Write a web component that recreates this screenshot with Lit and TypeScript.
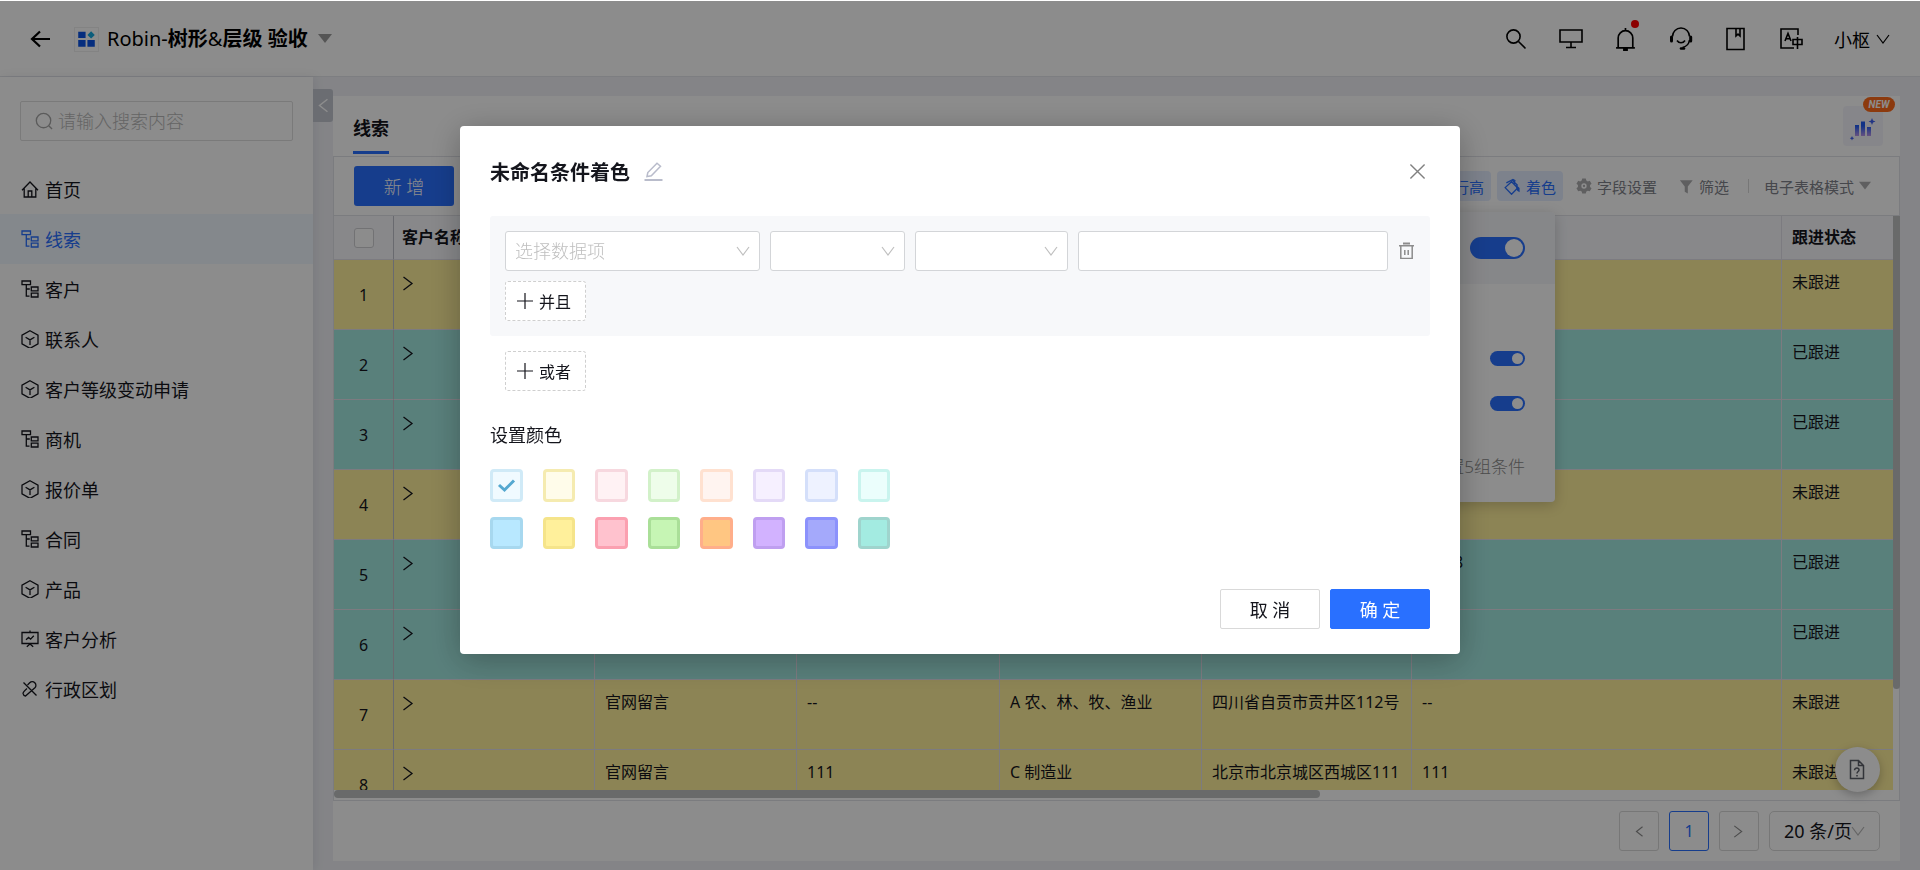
import { LitElement, html, svg, css, nothing } from "lit";
import { customElement, state } from "lit/decorators.js";
import { classMap } from "lit/directives/class-map.js";
import { styleMap } from "lit/directives/style-map.js";

const glyphs = {
  back: svg`<path d="M20 10H2M10 2.5L2 10l8 7.5" stroke-width="2.2"/>`,
  search: svg`<circle cx="9.500" cy="9.500" r="6.600"/><path d="M14.500 14.500l7 7"/>`,
  find: svg`<circle cx="9" cy="9" r="7.6"/><path d="M14.5 14.5l3.5 3.5"/>`,
  home: svg`<path d="M1 10.2L9 2l8 8.2M3.2 8.5V17h11.6V8.5M7.2 17v-6h3.6v6"/>`,
  tree: svg`<path d="M1 1h8.5v3.6H1zM5.3 4.6v11.6h3.2M5.3 9h3.5M10.3 7h6.7v3.8h-6.7zM10.3 13.2h6.7V17h-6.7z"/>`,
  cube: svg`<path d="M9 .8l8 4.4v8.6l-8 4.6-8-4.6V5.2zM4.6 7.3L9 9.9l4.4-2.6M9 9.9v5"/>`,
  board: svg`<path d="M9 .5V2M1 2.5h16v11H1zM5.8 16.8L9 14l3.2 2.8M5 9.8l2.6-2.4 2 1.8 3.2-3.4"/>`,
  link: svg`<path d="M2.5 2.500l13 13M6.500 5l2.200-2.200a3.600 3.600 0 0 1 5.200 5L4.500 16a3 3 0 0 1-2.500-2.500C2 12 3 11 6 8.500"/>`,
  monitor: svg`<path d="M1 3h22v12H1zM12 15v5.500M7 20.500h10"/>`,
  bell: svg`<path d="M2 20h18M4 20v-9.500a7 7 0 0 1 14 0V20M11 1v2.500"/><path d="M9.500 21h3v2h-3z" fill="currentColor"/>`,
  headset: svg`<path d="M3.500 9.500a8.500 8.500 0 0 1 17 0M20.500 13a9 9 0 0 1-7 7.500M8 13.500c2 3 6 3 8 0"/><path d="M2.500 10v4M21.700 10v4" stroke-width="3" stroke-linecap="round"/><path d="M12 21.500h3" stroke-width="2.600" stroke-linecap="round"/>`,
  book: svg`<path d="M3 1.500h17v21H3zM12 2v7l2-1.800 2 1.800V2"/>`,
  lang: svg`<path d="M19 8V2H2v19h13"/><path d="M6 14L9 6.500l3 7.500M7 11.800h4M14 12.500h9v5h-9zM18.500 10v12"/>`,
  down: svg`<path d="M1 3l6 8 6-8" stroke-width="1.200"/>`,
  left: svg`<path d="M11 2L4 7.500l7 5.500" stroke-width="1.300"/>`,
  right: svg`<path d="M1.500 1l8.500 6.500L1.500 14" stroke-width="1.300"/>`,
  paint: svg`<path d="M1.200 10.200L8 4l6.500 6.500-6.500 6.700zM2.500 5.200l7-3.700 2 1.200-1 4M8.500 2l6 6" stroke-width="1.400"/><path d="M12.500 7l4 3.500v4.500l-2.500-1.500-1-3z" fill="currentColor" stroke="none"/>`,
  gear: svg`<path fill="currentColor" stroke="none" fill-rule="evenodd" d="M7 .5h4l.6 2.300 1.700 1 2.200-.8 2 3.400L15.800 8v2l1.700 1.600-2 3.400-2.200-.7-1.700 1L11 17.500H7l-.6-2.200-1.700-1-2.200.7-2-3.400L2.200 10V8L.5 6.400l2-3.400 2.200.8 1.700-1zM9 6a3 3 0 1 0 0 6 3 3 0 0 0 0-6z"/><circle cx="9" cy="9" r="1.300" fill="currentColor" stroke="none"/>`,
  funnel: svg`<path d="M1 1.500h14.500L10 8.500v8l-3.500-2v-6z" fill="currentColor" stroke="none"/>`,
  caret: svg`<path d="M0 2h14L7 11z" fill="currentColor" stroke="none"/>`,
  pencil: svg`<path d="M.5 18h18" stroke-width="2"/><path d="M3 14.500l.8-4L13 1.200l3.500 3-9.200 9.500z"/>`,
  close: svg`<path d="M1.500 1.500l15 15M16.500 1.500l-15 15"/>`,
  trash: svg`<path d="M5 1.500h7" stroke-width="2"/><path d="M1 3.800h15M2.800 4v12.500h11.400V4M6.800 8v5M10.200 8v5"/>`,
  plus: svg`<path d="M8 0v16M0 8h16" stroke-width="1.200"/>`,
  tick: svg`<path d="M2 9l5.500 5L17 4.500" stroke-width="3"/>`,
  help: svg`<path d="M3.500 1.500h8l5 5v13h-13zM11.500 1.500v5h5M7.500 11.200c0-3 5-2.800 4.500 0-.3 1.500-2 1.300-2 3.300M10 16v1.500"/>`,
};

type Glyph = keyof typeof glyphs;

const icon = (name: Glyph, box: number, size = box, weight = 1.5) => html`<svg
  class="icon"
  viewBox="0 0 ${box} ${box}"
  width=${size}
  height=${size}
  fill="none"
  stroke="currentColor"
  stroke-width=${weight}
  aria-hidden="true"
>${glyphs[name]}</svg>`;

const base = css`
  * {
    box-sizing: border-box;
  }
  button,
  input,
  select {
    font: inherit;
    color: inherit;
    margin: 0;
    padding: 0;
    border: 0;
    background: none;
    outline: none;
  }
  a {
    color: inherit;
    text-decoration: none;
  }
  .icon {
    flex: none;
    display: block;
  }
`;

@customElement("app-header")
class AppHeader extends LitElement {
  static styles = [
    base,
    css`
      :host {
        box-sizing: border-box;
        display: flex;
        align-items: center;
        height: 77px;
        padding: 2px 30px 0;
        background: #fff;
        border-bottom: 1px solid #e4e6eb;
        color: #000;
      }
      .logo {
        width: 25px;
        height: 25px;
        margin: 0 8px 0 23px;
        border: 1px solid #eeeeee;
      }
      .title {
        margin: 0 10px 0 0;
        font-size: 20px;
        line-height: 28px;
        font-weight: 700;
      }
      .latin {
        font-weight: 400;
      }
      .caret {
        color: #9c9c9c;
      }
      .tools {
        display: flex;
        align-items: center;
        gap: 31px;
        margin-left: auto;
      }
      .tool {
        position: relative;
      }
      .dot {
        position: absolute;
        top: -7px;
        right: -1px;
        width: 8px;
        height: 8px;
        border-radius: 50%;
        background: #f00;
      }
      .user {
        display: flex;
        align-items: center;
        gap: 6px;
        font-size: 18px;
      }
    `,
  ];

  render() {
    const tools: [Glyph, string, number][] = [
      ["search", "搜索", 24],
      ["monitor", "桌面", 24],
      ["bell", "通知", 23],
      ["headset", "客服", 24],
      ["book", "手册", 24],
      ["lang", "语言", 24],
    ];
    return html`
      <button aria-label="返回">${icon("back", 21)}</button>
      <svg class="logo" viewBox="0 0 25 25" aria-hidden="true">
        <path d="M3.500 4h8v7h-8zM3.500 13h8v7.500h-8zM13.500 13h8v7.500h-8z" fill="#0a53e6" />
        <path d="M17.500 3.500l4 4-4 4-4-4z" fill="#14a9e0" />
      </svg>
      <h1 class="title"><span class="latin">Robin-</span>树形<span class="latin">&amp;</span>层级 验收</h1>
      <button class="caret" aria-label="切换应用">${icon("caret", 14)}</button>
      <div class="tools">
        ${tools.map(
          ([name, label, box]) => html`<button class="tool" aria-label=${label}>
            ${icon(name, box, 24, 1.6)}${name === "bell" ? html`<span class="dot"></span>` : nothing}
          </button>`
        )}
        <button class="user">小枢 ${icon("down", 14, 14)}</button>
      </div>
    `;
  }
}

@customElement("side-nav")
class SideNav extends LitElement {
  static styles = [
    base,
    css`
      :host {
        box-sizing: border-box;
        display: block;
        position: relative;
        flex: none;
        width: 313px;
        padding-top: 24px;
        background: #fff;
        box-shadow: 2px 0 10px rgba(0, 0, 40, 0.08);
        font-size: 18px;
        color: #14151c;
      }
      .search {
        display: flex;
        align-items: center;
        gap: 5px;
        height: 40px;
        margin: 0 20px 23px;
        padding: 0 14px;
        border: 1px solid #dedede;
        border-radius: 2px;
        color: #a6a6a6;
      }
      .query {
        flex: 1;
        min-width: 0;
        font-weight: 300;
      }
      .query::placeholder {
        color: #b8b8b8;
        opacity: 1;
      }
      .item {
        display: flex;
        align-items: center;
        gap: 6px;
        height: 50px;
        padding-left: 21px;
      }
      .active {
        background: #f0f7ff;
        color: #2970ff;
      }
      .collapse {
        position: absolute;
        z-index: 1;
        top: 12px;
        left: 100%;
        display: flex;
        align-items: center;
        justify-content: center;
        width: 20px;
        height: 33px;
        border-radius: 0 3px 3px 0;
        background: #c3c7d0;
        color: #fff;
      }
    `,
  ];

  render() {
    const items: [Glyph, string][] = [
      ["home", "首页"],
      ["tree", "线索"],
      ["tree", "客户"],
      ["cube", "联系人"],
      ["cube", "客户等级变动申请"],
      ["tree", "商机"],
      ["cube", "报价单"],
      ["tree", "合同"],
      ["cube", "产品"],
      ["board", "客户分析"],
      ["link", "行政区划"],
    ];
    return html`
      <label class="search">
        ${icon("find", 19, 18, 1.4)}
        <input class="query" type="search" placeholder="请输入搜索内容" aria-label="搜索" />
      </label>
      <nav>
        ${items.map(
          ([name, text]) => html`<a
            href="#"
            class=${classMap({ item: true, active: text === "线索" })}
            >${icon(name, 18, 18, 1.3)}${text}</a
          >`
        )}
      </nav>
      <button class="collapse" aria-label="收起">${icon("left", 15, 17)}</button>
    `;
  }
}

const YELLOW = "yellow";
const TEAL = "teal";

@customElement("lead-panel")
class LeadPanel extends LitElement {
  static styles = [
    base,
    css`
      :host {
        position: relative;
        display: flex;
        flex-direction: column;
        flex: 1;
        min-height: 0;
        background: #fff;
        color: #14151c;
      }
      .tabs {
        display: flex;
        align-items: flex-end;
        height: 60px;
        padding: 0 17px 0 20px;
      }
      .tab {
        padding-bottom: 10px;
        margin-bottom: 2px;
        border-bottom: 3px solid #2970ff;
        font-size: 18px;
        line-height: 26px;
        font-weight: 700;
      }
      .tab span {
        display: block;
      }
      .chart {
        position: relative;
        width: 40px;
        height: 40px;
        margin: 0 0 10px auto;
        border-radius: 4px;
        background: #f5f5fb;
      }
      .badge {
        position: absolute;
        top: -9px;
        right: -12px;
        width: 32px;
        border-radius: 8px;
        background: #ff6b1a;
        color: #fff;
        font: italic 700 10px/15px Roboto, sans-serif;
        text-align: center;
      }
      .frame {
        display: flex;
        flex-direction: column;
        flex: 1;
        min-height: 0;
        border: 1px solid #e1e2e8;
      }
      .toolbar {
        display: flex;
        align-items: center;
        height: 59px;
        flex: none;
        padding: 0 28px 0 20px;
        border-bottom: 1px solid #e1e2e8;
        font-size: 15px;
        color: #80828a;
      }
      .add {
        width: 100px;
        height: 40px;
        margin-right: auto;
        border-radius: 3px;
        background: #2970ff;
        color: #fff;
        font-size: 18px;
        font-weight: 300;
      }
      .tool {
        display: flex;
        align-items: center;
        gap: 5px;
        height: 30px;
        padding: 0 7px;
        border-radius: 4px;
        white-space: nowrap;
      }
      .tool .icon {
        color: #aeaeb0;
      }
      .on,
      .on .icon {
        color: #2970ff;
      }
      .on {
        margin-right: 6px;
        background: #e4edff;
      }
      .gap {
        margin-right: 8px;
      }
      .rule {
        width: 1px;
        height: 14px;
        margin: 0 8px 0 12px;
        background: #d9d9d9;
      }
      .mode {
        padding-right: 0;
      }
      .viewport {
        position: relative;
        flex: 1;
        min-height: 0;
        padding-bottom: 10px;
      }
      .scroller {
        height: 100%;
        margin-right: 6px;
        overflow: hidden;
      }
      .grid {
        table-layout: fixed;
        width: 1648px;
        border-collapse: separate;
        border-spacing: 0;
        font-size: 16px;
        line-height: 24px;
      }
      .grid th,
      .grid td {
        border: solid #e2e0ea;
        border-width: 0 1px 1px 0;
        text-align: left;
        vertical-align: top;
        white-space: nowrap;
        padding: 10px 10px 0;
        height: 70px;
      }
      .grid thead th {
        height: 44px;
        padding: 0 10px 2px;
        background: #f7f8fc;
        vertical-align: middle;
        font-weight: 700;
      }
      .grid .num,
      .grid thead .num {
        padding: 0;
        border-right-color: #c0c2ca;
        text-align: center;
        vertical-align: middle;
      }
      .grid .first {
        padding-left: 8px;
      }
      .yellow {
        background: #fff09b;
      }
      .teal {
        background: #a3e9e1;
      }
      .box {
        appearance: none;
        display: block;
        width: 20px;
        height: 20px;
        margin: 0 auto;
        border: 1px solid #cfcfd4;
        border-radius: 3px;
        background: #fff;
      }
      .expand {
        display: block;
        padding: 6px 0;
      }
      .vbar,
      .hbar {
        position: absolute;
        background: #bfc1c2;
      }
      .vbar {
        top: 0;
        right: -1px;
        width: 7px;
        height: 81%;
        border-radius: 0 0 4px 4px;
      }
      .hbar {
        left: 0;
        bottom: 2px;
        width: 63%;
        height: 8px;
        border-radius: 4px;
      }
      .pager {
        display: flex;
        justify-content: flex-end;
        gap: 10px;
        flex: none;
        padding: 10px 20px;
        font-size: 18px;
      }
      .page {
        display: flex;
        align-items: center;
        justify-content: center;
        width: 40px;
        height: 40px;
        border: 1px solid #d9d9d9;
        border-radius: 3px;
        color: #8c8c8c;
        font-size: 16px;
      }
      .current {
        border-color: #2970ff;
        color: #2970ff;
      }
      .size {
        position: relative;
        width: 111px;
      }
      .size select {
        appearance: none;
        width: 100%;
        height: 40px;
        padding: 0 14px;
        border: 1px solid #d9d9d9;
        border-radius: 5px;
      }
      .size .icon {
        position: absolute;
        right: 15px;
        top: 13px;
        color: #b8b8b8;
      }
      .popover {
        position: absolute;
        top: 116px;
        right: 345px;
        width: 450px;
        border-radius: 4px;
        background: #fff;
        box-shadow: 0 3px 14px rgba(0, 0, 0, 0.2);
        color: #8c8c8c;
        font-size: 17px;
        font-weight: 300;
      }
      .popover-head {
        display: flex;
        justify-content: flex-end;
        padding: 25px 30px;
        border-radius: 4px 4px 0 0;
        background: #f5f6f9;
      }
      .popover-body {
        display: flex;
        flex-direction: column;
        align-items: flex-end;
        gap: 30px;
        padding: 67px 30px 22px;
      }
      .note {
        margin: 13px 0 0;
        line-height: 26px;
      }
      .switch {
        appearance: none;
        display: flex;
        justify-content: flex-end;
        width: 35px;
        height: 15px;
        padding: 2px;
        border-radius: 11px;
        background: #2970ff;
      }
      .switch::after {
        content: "";
        height: 100%;
        aspect-ratio: 1;
        border-radius: 50%;
        background: #fff;
      }
      .large {
        width: 55px;
        height: 22px;
      }
    `,
  ];

  private rows: [string, string[]][] = [
    [YELLOW, ["", "", "", "", "", "未跟进"]],
    [TEAL, ["", "", "", "", "", "已跟进"]],
    [TEAL, ["", "", "", "", "", "已跟进"]],
    [YELLOW, ["", "", "", "", "", "未跟进"]],
    [TEAL, ["", "", "", "", "电话8", "已跟进"]],
    [TEAL, ["", "", "", "", "", "已跟进"]],
    [YELLOW, ["官网留言", "--", "A 农、林、牧、渔业", "四川省自贡市贡井区112号", "--", "未跟进"]],
    [YELLOW, ["官网留言", "111", "C 制造业", "北京市北京城区西城区111", "111", "未跟进"]],
  ];

  render() {
    const widths = [60, 201, 202, 203, 202, 210, 370, 200];
    return html`
      <div class="tabs">
        <a class="tab" href="#"><span>线索</span></a>
        <button class="chart" aria-label="智能图表">
          <svg class="icon" viewBox="0 0 40 40" aria-hidden="true">
            <defs>
              <linearGradient id="bar" gradientUnits="userSpaceOnUse" x1="0" y1="15" x2="0" y2="31">
                <stop offset="0.300" stop-color="#1f5cf5" />
                <stop offset="1" stop-color="#c99bea" />
              </linearGradient>
            </defs>
            <path d="M12 19h4v11h-4zM18 15.500h4V30h-4zM24 21h4v9h-4z" fill="url(#bar)" />
            <path d="M29 12l1 2.500 2.500 1-2.500 1-1 2.500-1-2.500-2.500-1 2.500-1zM9 30l.7 1.500 1.500.7-1.500.7L9 34.500l-.7-1.600-1.500-.7 1.500-.7z" fill="#3d5ff0" />
          </svg>
          <span class="badge">NEW</span>
        </button>
      </div>
      <div class="frame">
        <div class="toolbar">
          <button class="add">新 增</button>
          <button class="tool on">行高</button>
          <button class="tool on">${icon("paint", 18, 17)}着色</button>
          <button class="tool gap">${icon("gear", 18, 16)}字段设置</button>
          <button class="tool">${icon("funnel", 17, 15)}筛选</button>
          <span class="rule"></span>
          <button class="tool mode">电子表格模式 ${icon("caret", 14, 12)}</button>
        </div>
        <div class="viewport">
          <div class="scroller">
            <table class="grid">
              <colgroup>
                ${widths.map((w) => html`<col style=${styleMap({ width: `${w}px` })} />`)}
              </colgroup>
              <thead>
                <tr>
                  <th class="num"><input class="box" type="checkbox" aria-label="全选" /></th>
                  <th class="first">客户名称</th>
                  <th></th>
                  <th></th>
                  <th></th>
                  <th></th>
                  <th></th>
                  <th>跟进状态</th>
                </tr>
              </thead>
              <tbody>
                ${this.rows.map(
                  ([tone, cells], i) => html`<tr class=${tone}>
                    <td class="num">${i + 1}</td>
                    <td class="first">
                      <button class="expand" aria-label="展开">${icon("right", 15, 15, 1.3)}</button>
                    </td>
                    ${cells.map((c) => html`<td>${c}</td>`)}
                  </tr>`
                )}
              </tbody>
            </table>
          </div>
          <div class="vbar"></div>
          <div class="hbar"></div>
        </div>
      </div>
      <div class="pager">
        <button class="page" aria-label="上一页">${icon("left", 15, 13)}</button>
        <button class="page current">1</button>
        <button class="page" aria-label="下一页">${icon("right", 15, 13)}</button>
        <label class="size">
          <select aria-label="每页条数">
            <option>20 条/页</option>
          </select>
          ${icon("down", 14, 14)}
        </label>
      </div>
      <div class="popover">
        <div class="popover-head">
          <input class="switch large" type="checkbox" checked aria-label="启用着色" />
        </div>
        <div class="popover-body">
          <input class="switch" type="checkbox" checked aria-label="条件一" />
          <input class="switch" type="checkbox" checked aria-label="条件二" />
          <p class="note">设置5组条件</p>
        </div>
      </div>
    `;
  }
}

@customElement("color-dialog")
class ColorDialog extends LitElement {
  static styles = [
    base,
    css`
      :host {
        box-sizing: border-box;
        display: block;
        width: 1000px;
        max-width: 90vw;
        padding: 30px 30px 25px;
        border-radius: 4px;
        background: #fff;
        box-shadow: 0 6px 32px rgba(0, 0, 0, 0.28);
        color: #14151c;
        font-size: 18px;
      }
      .head {
        display: flex;
        align-items: center;
        gap: 14px;
        height: 34px;
        margin-bottom: 26px;
      }
      .title {
        margin: 0;
        font-size: 20px;
        line-height: 28px;
        font-weight: 700;
      }
      .edit,
      .close {
        padding-bottom: 4px;
      }
      .edit {
        color: #b9bccb;
      }
      .close {
        margin-left: auto;
        margin-right: 4px;
        color: #808080;
      }
      .group {
        display: flex;
        flex-direction: column;
        align-items: flex-start;
        gap: 10px;
        padding: 15px;
        border-radius: 3px;
        background: #f7f8fa;
      }
      .row {
        display: grid;
        grid-template-columns: 255px 135px 153px 1fr auto;
        align-items: center;
        gap: 10px;
        width: 100%;
      }
      .pick {
        position: relative;
      }
      .pick select,
      .value {
        appearance: none;
        display: block;
        width: 100%;
        height: 40px;
        padding: 0 9px;
        border: 1px solid #d3d5d8;
        border-radius: 3px;
        background: #fff;
        color: #bfbfbf;
        font-weight: 300;
      }
      .pick .icon {
        position: absolute;
        top: 13px;
        right: 10px;
        color: #bfbfbf;
        pointer-events: none;
      }
      .remove {
        padding-bottom: 2px;
        color: #8c8c8c;
      }
      .dashed {
        display: flex;
        align-items: center;
        gap: 6px;
        height: 40px;
        padding: 0 14px 0 11px;
        border: 1px dashed #cfcfcf;
        border-radius: 3px;
        background: #fff;
        font-size: 16px;
      }
      .either {
        margin: 15px 15px 30px;
      }
      .colors {
        margin: 0;
        padding: 0;
        border: 0;
      }
      .caption {
        padding: 0;
        line-height: 28px;
      }
      .swatches {
        display: grid;
        grid-template-columns: repeat(8, 1fr);
        gap: 15px 20px;
        width: 400px;
        margin-top: 20px;
      }
      .swatch {
        position: relative;
        aspect-ratio: 1;
      }
      .swatch input {
        appearance: none;
        display: block;
        width: 100%;
        height: 100%;
        border: 3px solid;
        border-radius: 4px;
      }
      .swatch .icon {
        position: absolute;
        inset: 0;
        margin: auto;
        color: #55a8d0;
      }
      .foot {
        display: flex;
        justify-content: flex-end;
        gap: 10px;
        margin-top: 40px;
      }
      .btn {
        width: 100px;
        height: 40px;
        border: 1px solid #d9d9d9;
        border-radius: 2px;
      }
      .primary {
        border-color: #2970ff;
        background: #2970ff;
        color: #fff;
      }
    `,
  ];

  @state() private picked = 0;

  private palette: [string, string][] = [
    ["#f0faff", "#d0eaf7"],
    ["#fffcea", "#f5ebb0"],
    ["#fff2f4", "#f7d8df"],
    ["#eefdea", "#d2f1c9"],
    ["#fff4f0", "#ffe1d0"],
    ["#f6f0ff", "#e4daf7"],
    ["#eef2ff", "#d4dffa"],
    ["#ebfefc", "#c9f4ee"],
    ["#b8e8ff", "#a7d8ef"],
    ["#fff09b", "#f5e48a"],
    ["#ffc2ce", "#fba0b0"],
    ["#c6f5b4", "#aadf98"],
    ["#ffc682", "#ffae8a"],
    ["#d2b2ff", "#bf9ff0"],
    ["#a4a9fb", "#8c92fc"],
    ["#a3ebe1", "#9fd4cd"],
  ];

  private pick(label: string, text = "") {
    return html`<label class="pick">
      <select aria-label=${label}>
        <option>${text}</option>
      </select>
      ${icon("down", 14, 14)}
    </label>`;
  }

  render() {
    return html`
      <div class="head">
        <h2 class="title">未命名条件着色</h2>
        <button class="edit" aria-label="重命名">${icon("pencil", 19, 19)}</button>
        <button class="close" aria-label="关闭">${icon("close", 18, 17)}</button>
      </div>
      <div class="group">
        <div class="row">
          ${this.pick("数据项", "选择数据项")} ${this.pick("关系")} ${this.pick("类型")}
          <input class="value" type="text" aria-label="值" />
          <button class="remove" aria-label="删除">${icon("trash", 17)}</button>
        </div>
        <button class="dashed">${icon("plus", 16)}并且</button>
      </div>
      <button class="dashed either">${icon("plus", 16)}或者</button>
      <fieldset class="colors">
        <legend class="caption">设置颜色</legend>
        <div class="swatches">
          ${this.palette.map(
            ([fill, edge], i) => html`<label class="swatch">
              <input
                type="radio"
                name="color"
                aria-label="颜色 ${i + 1}"
                .checked=${this.picked === i}
                @change=${() => (this.picked = i)}
                style=${styleMap({ background: fill, borderColor: edge })}
              />
              ${this.picked === i ? icon("tick", 19, 19) : nothing}
            </label>`
          )}
        </div>
      </fieldset>
      <div class="foot">
        <button class="btn">取 消</button>
        <button class="btn primary">确 定</button>
      </div>
    `;
  }
}

@customElement("app-root")
class AppRoot extends LitElement {
  static styles = [
    base,
    css`
      :host {
        display: flex;
        flex-direction: column;
        height: 100vh;
        overflow: hidden;
        background: #f0f1f6;
        font-family: "Noto Sans", "Noto Sans CJK SC", sans-serif;
      }
      .body {
        display: flex;
        flex: 1;
        min-height: 0;
      }
      .main {
        display: flex;
        flex: 1;
        min-width: 0;
        padding: 19px 20px 9px;
      }
      lead-panel {
        min-width: 0;
      }
      .help {
        position: fixed;
        right: 40px;
        bottom: 78px;
        display: flex;
        align-items: center;
        justify-content: center;
        width: 45px;
        height: 45px;
        border-radius: 50%;
        background: #fff;
        box-shadow: 0 3px 10px rgba(0, 0, 0, 0.25);
        color: #5c5f69;
      }
      .mask {
        position: fixed;
        z-index: 10;
        inset: 1px 0 0;
        display: flex;
        align-items: flex-start;
        justify-content: center;
        padding-top: 125px;
        background: rgba(0, 0, 0, 0.45);
      }
    `,
  ];

  render() {
    return html`
      <app-header></app-header>
      <div class="body">
        <side-nav></side-nav>
        <main class="main"><lead-panel></lead-panel></main>
      </div>
      <button class="help" aria-label="帮助">${icon("help", 21, 21)}</button>
      <div class="mask">
        <color-dialog role="dialog" aria-modal="true" aria-label="未命名条件着色"></color-dialog>
      </div>
    `;
  }
}
